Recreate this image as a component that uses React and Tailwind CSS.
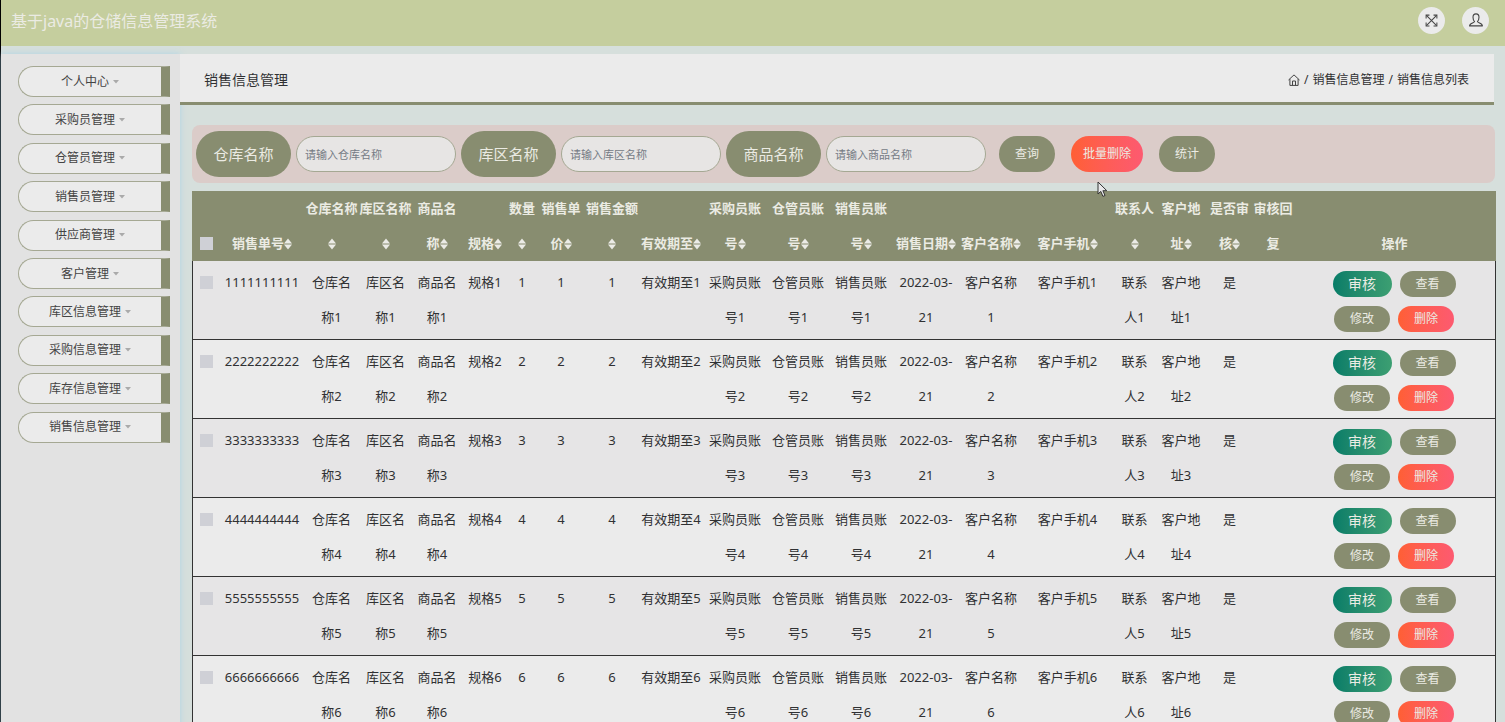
import React, { useState } from "react";

const menus = [
  "个人中心",
  "采购员管理",
  "仓管员管理",
  "销售员管理",
  "供应商管理",
  "客户管理",
  "库区信息管理",
  "采购信息管理",
  "库存信息管理",
  "销售信息管理",
];

// 每列：表头分行、是否可排序、列宽、单元格分行
const columns = [
  { head: ["销售单号"], sort: true, width: "w-[84px]", cell: (n) => [String(n).repeat(10)] },
  { head: ["仓库名称", ""], sort: true, width: "w-[55px]", cell: (n) => ["仓库名", `称${n}`] },
  { head: ["库区名称", ""], sort: true, width: "w-[53px]", cell: (n) => ["库区名", `称${n}`] },
  { head: ["商品名", "称"], sort: true, width: "w-[50px]", cell: (n) => ["商品名", `称${n}`] },
  { head: ["规格"], sort: true, width: "w-[46px]", cell: (n) => [`规格${n}`] },
  { head: ["数量", ""], sort: true, width: "w-[28px]", cell: (n) => [n] },
  { head: ["销售单", "价"], sort: true, width: "w-[50px]", cell: (n) => [n] },
  { head: ["销售金额", ""], sort: true, width: "w-[52px]", cell: (n) => [n] },
  { head: ["有效期至"], sort: true, width: "w-[66px]", cell: (n) => [`有效期至${n}`] },
  { head: ["采购员账", "号"], sort: true, width: "w-[62px]", cell: (n) => ["采购员账", `号${n}`] },
  { head: ["仓管员账", "号"], sort: true, width: "w-[64px]", cell: (n) => ["仓管员账", `号${n}`] },
  { head: ["销售员账", "号"], sort: true, width: "w-[62px]", cell: (n) => ["销售员账", `号${n}`] },
  { head: ["销售日期"], sort: true, width: "w-[68px]", cell: () => ["2022-03-", "21"] },
  { head: ["客户名称"], sort: true, width: "w-[62px]", cell: (n) => ["客户名称", n] },
  { head: ["客户手机"], sort: true, width: "w-[91px]", cell: (n) => [`客户手机${n}`] },
  { head: ["联系人", ""], sort: true, width: "w-[43px]", cell: (n) => ["联系", `人${n}`] },
  { head: ["客户地", "址"], sort: true, width: "w-[50px]", cell: (n) => ["客户地", `址${n}`] },
  { head: ["是否审", "核"], sort: true, width: "w-[47px]", cell: () => ["是"] },
  { head: ["审核回", "复"], sort: false, width: "w-[40px]", cell: () => [""] },
];

const rows = [1, 2, 3, 4, 5, 6];

const filters = ["仓库名称", "库区名称", "商品名称"];

function SortIcon() {
  return (
    <svg width="8" height="12" viewBox="0 0 8 12" className="inline-block align-[-2px]" fill="#ebebe6">
      <path d="M4 0.4 L8 5.5 H0 Z" />
      <path d="M4 11.6 L0 6.5 H8 Z" />
    </svg>
  );
}

function Lines({ items }) {
  return items.map((t, i) => (
    <React.Fragment key={i}>
      {i > 0 && <br />}
      {t}
    </React.Fragment>
  ));
}

function Checkbox({ label, ...rest }) {
  return (
    <input
      type="checkbox"
      aria-label={label}
      className="appearance-none block mx-auto w-[13px] h-[13px] bg-[#cfd0d6] checked:bg-[#0a8069]"
      {...rest}
    />
  );
}

export default function App() {
  const [checked, setChecked] = useState([]);

  const toggle = (n) =>
    setChecked(checked.includes(n) ? checked.filter((x) => x !== n) : [...checked, n]);

  return (
    <div className="relative min-h-screen flex flex-col border-l border-black bg-[#d6dfdc] text-[#303133] font-['Noto_Sans','Noto_Sans_CJK_SC',sans-serif]">
      <header className="h-[46px] shrink-0 flex items-center justify-between bg-[#c5ce9e] pl-2.5 pr-4 pb-1.5">
        <h1 className="pt-0.5 text-base text-[#ebebe3]">基于java的仓储信息管理系统</h1>
        <div className="flex gap-[17px]">
          <button aria-label="全屏" className="w-[27px] h-[27px] rounded-full bg-[#ebebeb] flex items-center justify-center">
            <svg width="13" height="13" viewBox="0 0 14 14" fill="none" stroke="#444" strokeWidth="1.1">
              <path d="M1.5 1.5 L12.5 12.5 M12.5 1.5 L1.5 12.5" />
              <path d="M1.2 4.8 V1.2 H4.8 M9.2 1.2 H12.8 V4.8 M12.8 9.2 V12.8 H9.2 M4.8 12.8 H1.2 V9.2" />
            </svg>
          </button>
          <button aria-label="用户" className="w-[27px] h-[27px] rounded-full bg-[#ebebeb] flex items-center justify-center">
            <svg width="14" height="14" viewBox="0 0 14 14" fill="none" stroke="#444" strokeWidth="1.1" strokeLinejoin="round">
              <path d="M5.6 8.6 C4.4 7.4 4 5.8 4 4.2 C4 2.1 5.3 0.9 7 0.9 C8.7 0.9 10 2.1 10 4.2 C10 5.8 9.6 7.4 8.4 8.6 C8.4 9.9 13.2 9.6 13.4 12.9 H0.6 C0.8 9.6 5.6 9.9 5.6 8.6 Z" />
            </svg>
          </button>
        </div>
      </header>

      <div className="flex-1 flex pt-2">
        <aside className="w-[179px] shrink-0 bg-[#e2e2e2] pt-3 pl-[17px] pr-2.5 shadow-[0_0_6px_rgba(160,210,235,0.7)]">
          <nav className="grid grid-rows-10 h-[384px]">
            {menus.map((m) => (
              <button
                key={m}
                className="h-[31px] flex items-center justify-center gap-1 rounded-l-full border border-r-9 border-[#a5a893] border-r-[#888d70] bg-[#ebebeb] text-xs text-[#444]"
              >
                {m}
                <svg width="6" height="4" viewBox="0 0 6 4" fill="#aaa">
                  <path d="M0 0 H6 L3 3.6 Z" />
                </svg>
              </button>
            ))}
          </nav>
        </aside>

        <main className="flex-1 min-w-0">
          <div className="mr-[11px] h-[51px] flex items-center justify-between bg-[#ebebeb] border-b-3 border-[#888d70] pl-6 pr-[25px] pt-[3px]">
            <h2 className="text-sm text-[#303133]">销售信息管理</h2>
            <div className="flex items-center gap-1 text-xs text-[#303133]">
              <a href="#home" aria-label="首页">
                <svg width="12" height="12" viewBox="0 0 12 12" fill="none" stroke="#444" strokeWidth="1">
                  <path d="M0.5 6 L6 0.9 L11.5 6 M1.9 5 V11.4 H10.1 V5" />
                  <path d="M4.5 11.4 V7 H7.5 V11.4" />
                </svg>
              </a>
              <span>/</span>
              <a href="#sales">销售信息管理</a>
              <span>/</span>
              <span>销售信息列表</span>
            </div>
          </div>

          <div className="pl-3 pr-[9px] pt-5">
            <form
              className="mr-px flex items-center gap-[5px] rounded-lg bg-[#dbccc9] px-1 py-1.5"
              onSubmit={(e) => e.preventDefault()}
            >
              {filters.map((f) => (
                <React.Fragment key={f}>
                  <label
                    htmlFor={f}
                    className="w-[95px] h-[46px] flex items-center justify-center rounded-full bg-[#888d70] text-[15px] text-[#ebebe3]"
                  >
                    {f}
                  </label>
                  <input
                    id={f}
                    type="text"
                    placeholder={`请输入${f}`}
                    className="w-40 h-9 rounded-full border border-[#a5a893] bg-[#e7e5e4] px-2 text-[11px] placeholder:text-[#757b85] outline-none"
                  />
                </React.Fragment>
              ))}
              <div className="flex gap-4 ml-2 text-xs text-[#ebebe3]">
                <button type="submit" className="w-14 h-9 rounded-full bg-[#888d70]">查询</button>
                <button type="button" className="w-[72px] h-9 rounded-full bg-linear-to-r from-[#ff5f34] to-[#fd5a70]">
                  批量删除
                </button>
                <button type="button" className="w-14 h-9 rounded-full bg-[#888d70]">统计</button>
              </div>
            </form>

            <table className="mt-2 w-full table-fixed border-separate border-spacing-0 text-[13px] leading-[35px] text-center whitespace-nowrap">
              <colgroup>
                <col className="w-[28px]" />
                {columns.map((c, i) => (
                  <col key={i} className={c.width} />
                ))}
                <col />
              </colgroup>
              <thead className="bg-[#888d70] text-[#ebebe3]">
                <tr>
                  <th className="p-0 align-bottom pb-[11px]">
                    <Checkbox
                      label="全选"
                      checked={checked.length === rows.length}
                      onChange={() => setChecked(checked.length === rows.length ? [] : rows)}
                    />
                  </th>
                  {columns.map((c, i) => (
                    <th key={i} className="p-0 align-bottom font-bold">
                      <Lines items={c.head} />
                      {c.sort && <SortIcon />}
                    </th>
                  ))}
                  <th className="p-0 align-bottom font-bold">操作</th>
                </tr>
              </thead>
              <tbody>
                {rows.map((n) => (
                  <tr key={n} className="odd:bg-[#e6e5e6] even:bg-[#ebebeb]">
                    <td className="pt-[15px] align-top border-b border-l border-[#333]">
                      <Checkbox label={`选择${n}`} checked={checked.includes(n)} onChange={() => toggle(n)} />
                    </td>
                    {columns.map((c, i) => (
                      <td key={i} className="py-1 align-top border-b border-[#333]">
                        <Lines items={c.cell(n)} />
                      </td>
                    ))}
                    <td className="pt-2.5 pb-[7px] align-top border-b border-r border-[#333] text-xs text-[#ebebe3]">
                      <div className="flex flex-col gap-[9px]">
                        <div className="flex justify-center gap-2">
                          <button className="w-[59px] h-[26px] rounded-full bg-linear-to-r from-[#067d68] to-[#3c9f72] text-sm">
                            审核
                          </button>
                          <button className="w-14 h-[26px] rounded-full bg-[#888d70]">查看</button>
                        </div>
                        <div className="flex justify-center gap-2">
                          <button className="w-14 h-[26px] rounded-full bg-[#888d70]">修改</button>
                          <button className="w-14 h-[26px] rounded-full bg-linear-to-r from-[#ff5f34] to-[#fd5a70]">
                            删除
                          </button>
                        </div>
                      </div>
                    </td>
                  </tr>
                ))}
              </tbody>
            </table>
          </div>
        </main>
      </div>

      {/* 鼠标指针 */}
      <svg
        width="11"
        height="17"
        viewBox="0 0 11 17"
        className="absolute left-[1096px] top-[181px] pointer-events-none"
        fill="#e8e8ea"
        stroke="#333"
        strokeWidth="1"
      >
        <path d="M1 1 V13 L3.8 10.4 L5.9 15.4 L8 14.5 L5.9 9.7 H9.8 Z" />
      </svg>
    </div>
  );
}
